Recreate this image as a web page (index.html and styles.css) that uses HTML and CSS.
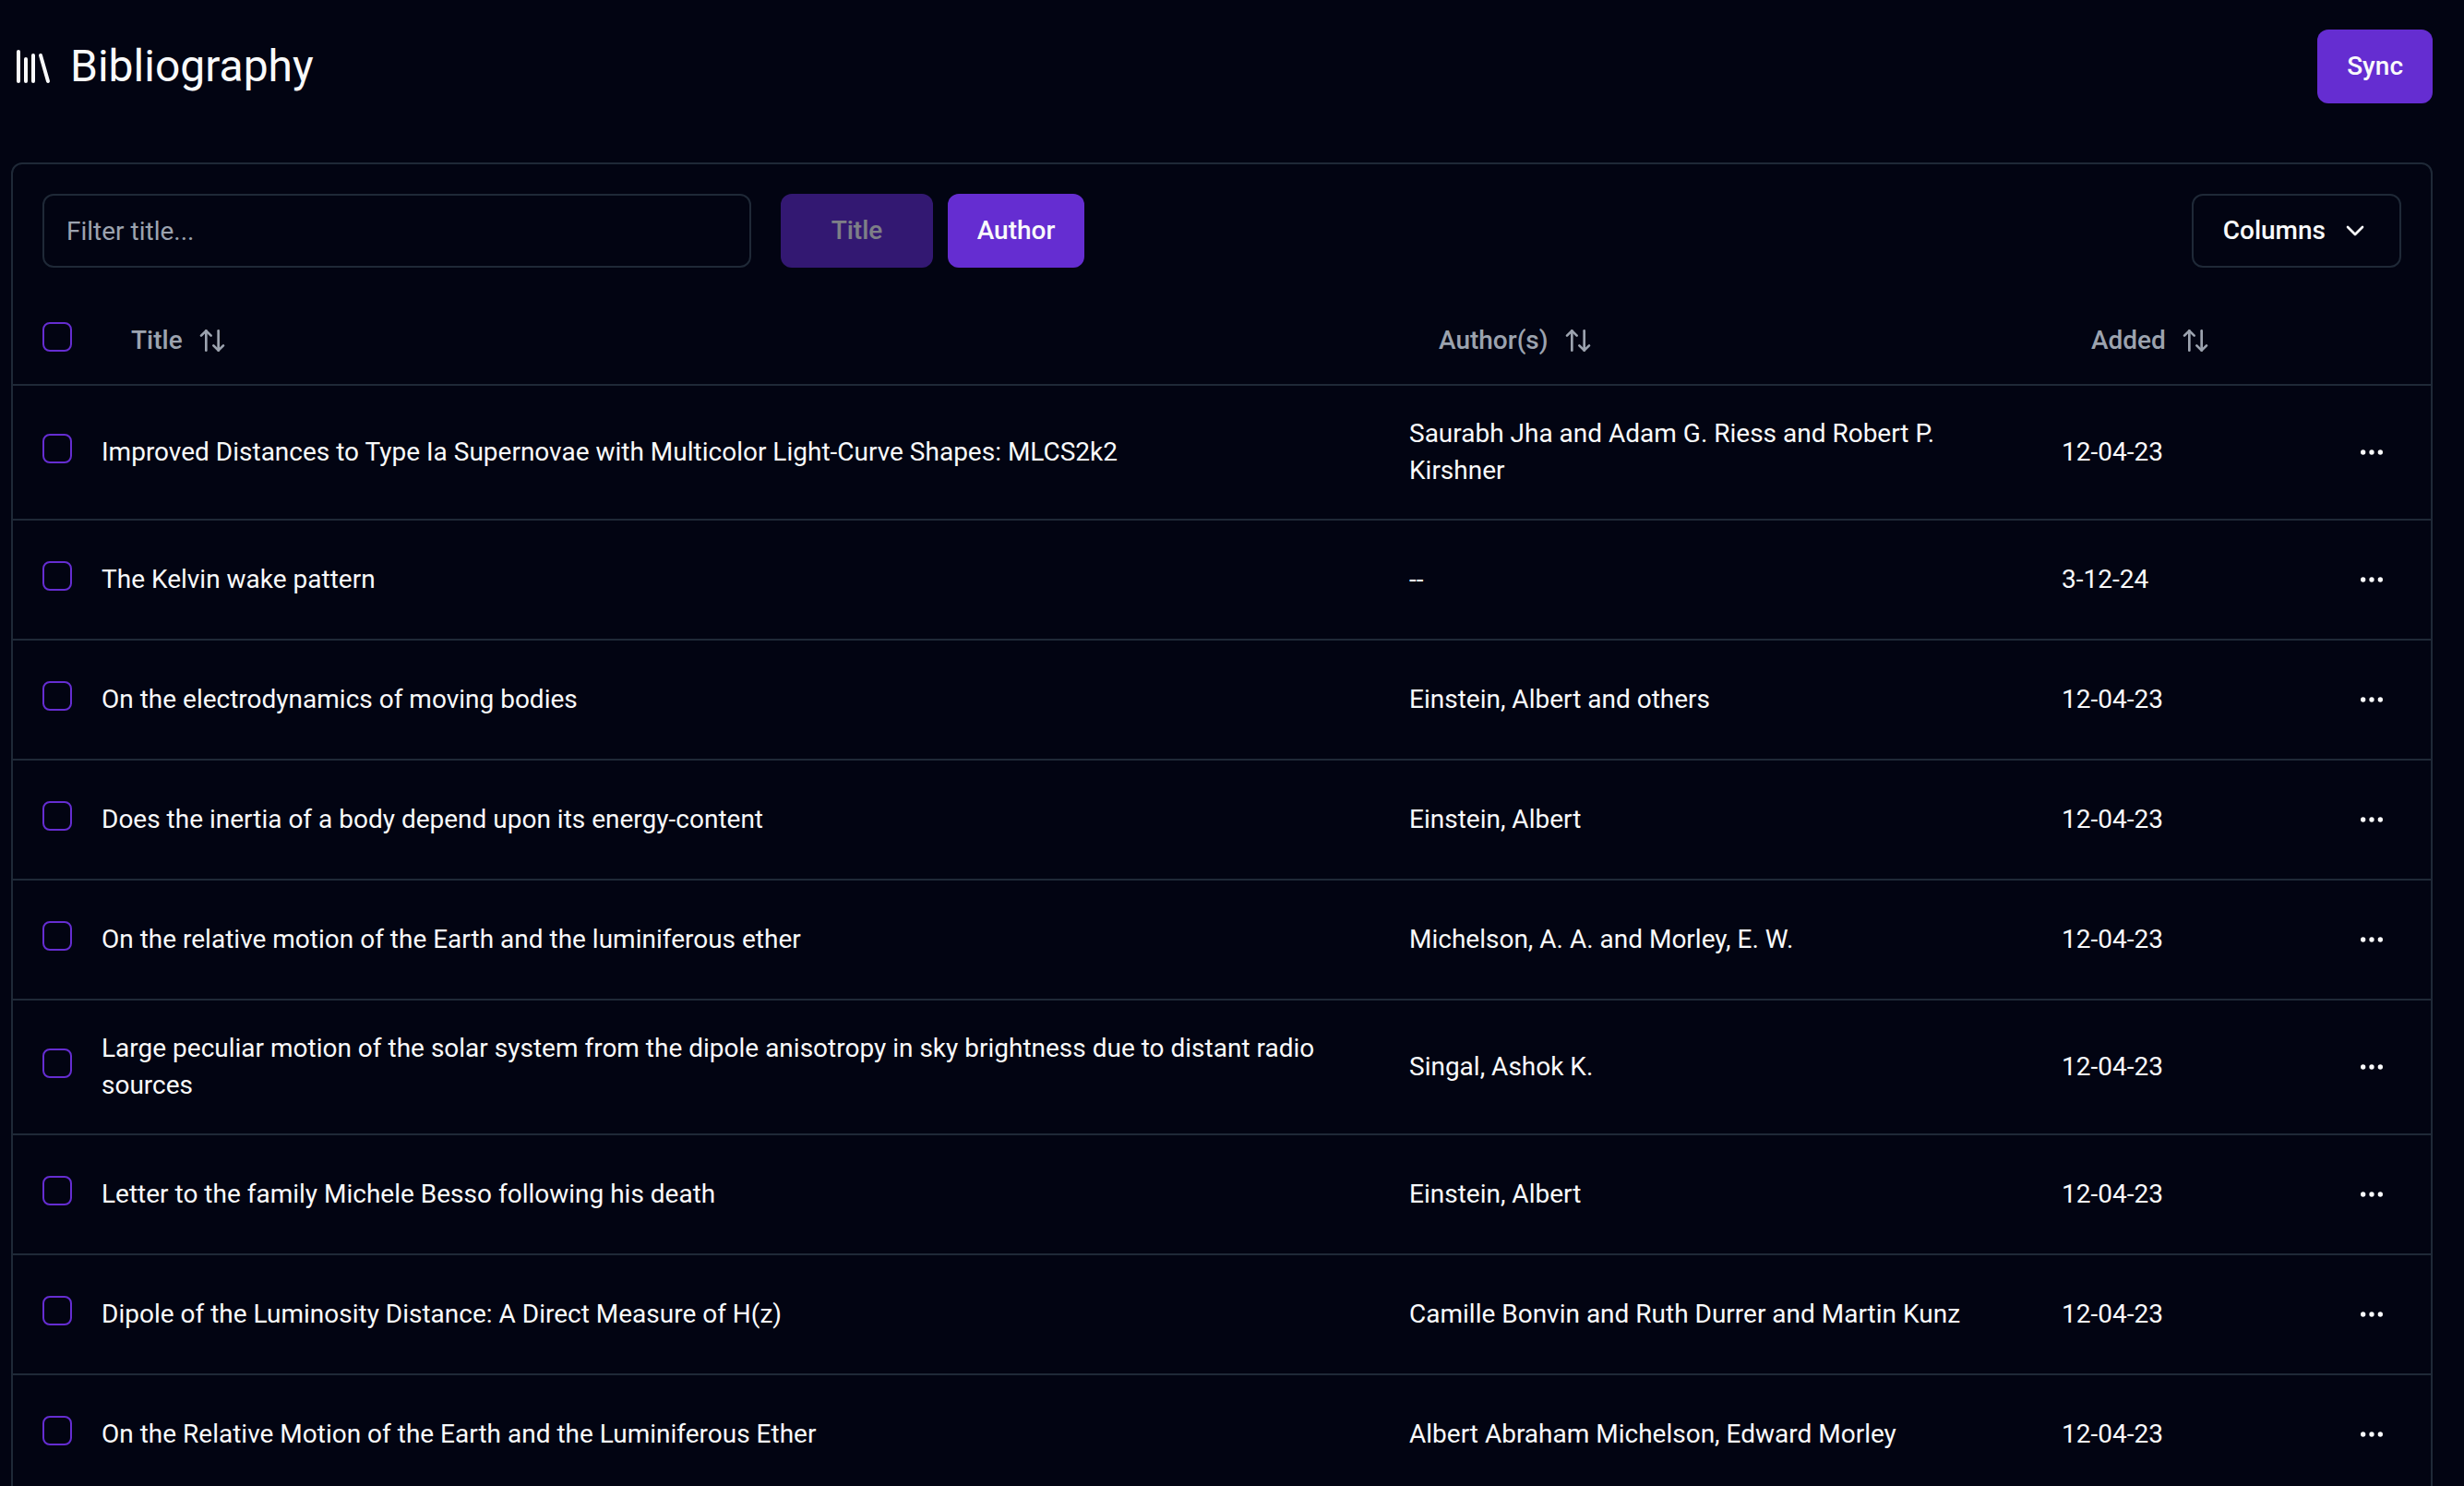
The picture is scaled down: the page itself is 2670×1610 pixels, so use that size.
FILE: index.html
```html
<!doctype html>
<html>

<head>
    <meta charset="utf-8">
    <title>Bibliography</title>
    <link rel="stylesheet" href="styles.css">
</head>

<body>
    <header class="page-header">
        <h1 class="page-title">
            <svg class="icon-title" viewBox="0 0 24 24" fill="none" stroke="currentColor" stroke-width="2" stroke-linecap="round" stroke-linejoin="round">
                <path d="m16 6 4 14" />
                <path d="M12 6v14" />
                <path d="M8 8v12" />
                <path d="M4 4v16" />
            </svg>
            Bibliography
        </h1>
        <button class="btn btn-primary" type="button">Sync</button>
    </header>

    <section class="card">
        <div class="toolbar">
            <input class="filter" type="text" placeholder="Filter title...">
            <button class="btn btn-primary btn-disabled" type="button">Title</button>
            <button class="btn btn-primary btn-author" type="button">Author</button>
            <button class="btn btn-outline" type="button">
                Columns
                <svg class="icon" viewBox="0 0 24 24" fill="none" stroke="currentColor" stroke-width="2" stroke-linecap="round" stroke-linejoin="round">
                    <path d="m6 9 6 6 6-6" />
                </svg>
            </button>
        </div>

        <table class="table">
            <colgroup>
                <col class="col-check">
                <col class="col-title">
                <col class="col-author">
                <col class="col-added">
                <col class="col-actions">
            </colgroup>
            <thead>
                <tr>
                    <th class="cell-check"><span class="checkbox"></span></th>
                    <th>
                        <span class="sort">Title
                            <svg class="icon" viewBox="0 0 24 24" fill="none" stroke="currentColor" stroke-width="2" stroke-linecap="round" stroke-linejoin="round"><path d="m21 16-4 4-4-4" /><path d="M17 20V4" /><path d="m3 8 4-4 4 4" /><path d="M7 4v16" /></svg>
                        </span>
                    </th>
                    <th>
                        <span class="sort">Author(s)
                            <svg class="icon" viewBox="0 0 24 24" fill="none" stroke="currentColor" stroke-width="2" stroke-linecap="round" stroke-linejoin="round"><path d="m21 16-4 4-4-4" /><path d="M17 20V4" /><path d="m3 8 4-4 4 4" /><path d="M7 4v16" /></svg>
                        </span>
                    </th>
                    <th>
                        <span class="sort">Added
                            <svg class="icon" viewBox="0 0 24 24" fill="none" stroke="currentColor" stroke-width="2" stroke-linecap="round" stroke-linejoin="round"><path d="m21 16-4 4-4-4" /><path d="M17 20V4" /><path d="m3 8 4-4 4 4" /><path d="M7 4v16" /></svg>
                        </span>
                    </th>
                    <th></th>
                </tr>
            </thead>
            <tbody id="rows"></tbody>
        </table>
    </section>

    <script>
        var papers = [
            ['Improved Distances to Type Ia Supernovae with Multicolor Light-Curve Shapes: MLCS2k2', 'Saurabh Jha and Adam G. Riess and Robert P. Kirshner', '12-04-23'],
            ['The Kelvin wake pattern', '--', '3-12-24'],
            ['On the electrodynamics of moving bodies', 'Einstein, Albert and others', '12-04-23'],
            ['Does the inertia of a body depend upon its energy-content', 'Einstein, Albert', '12-04-23'],
            ['On the relative motion of the Earth and the luminiferous ether', 'Michelson, A. A. and Morley, E. W.', '12-04-23'],
            ['Large peculiar motion of the solar system from the dipole anisotropy in sky brightness due to distant radio sources', 'Singal, Ashok K.', '12-04-23'],
            ['Letter to the family Michele Besso following his death', 'Einstein, Albert', '12-04-23'],
            ['Dipole of the Luminosity Distance: A Direct Measure of H(z)', 'Camille Bonvin and Ruth Durrer and Martin Kunz', '12-04-23'],
            ['On the Relative Motion of the Earth and the Luminiferous Ether', 'Albert Abraham Michelson, Edward Morley', '12-04-23']
        ];

        var dots = '<svg class="icon" viewBox="0 0 24 24" fill="none" stroke="currentColor" stroke-width="2" stroke-linecap="round" stroke-linejoin="round"><circle cx="12" cy="12" r="1" /><circle cx="19" cy="12" r="1" /><circle cx="5" cy="12" r="1" /></svg>';

        var html = '';
        for (var i = 0; i < papers.length; i++) {
            html += '<tr>';
            html += '<td class="cell-check"><span class="checkbox"></span></td>';
            html += '<td>' + papers[i][0] + '</td>';
            html += '<td>' + papers[i][1] + '</td>';
            html += '<td>' + papers[i][2] + '</td>';
            html += '<td><span class="row-menu">' + dots + '</span></td>';
            html += '</tr>';
        }
        document.getElementById('rows').innerHTML = html;
    </script>
</body>

</html>
```

FILE: styles.css
```css
* {
    box-sizing: border-box;
}

html,
body {
    height: 100%;
    overflow: hidden;
}

body {
    margin: 0;
    padding: 32px 34px 0 12px;
    background: #020412;
    color: #f9fafb;
    font-family: Roboto, sans-serif;
    font-size: 28px;
    line-height: 40px;
}

.page-header {
    display: flex;
    justify-content: space-between;
    align-items: center;
    height: 80px;
    margin-bottom: 64px;
}

.page-title {
    display: flex;
    align-items: center;
    gap: 16px;
    margin: 0;
    font-size: 48px;
    font-weight: 400;
    line-height: 56px;
}

.icon-title {
    width: 48px;
    height: 48px;
}

.icon {
    flex: none;
    width: 32px;
    height: 32px;
}

.btn {
    display: inline-flex;
    align-items: center;
    justify-content: center;
    height: 80px;
    padding: 0 32px;
    border: none;
    border-radius: 12px;
    font: inherit;
    font-weight: 500;
    color: #f9fafb;
}

.btn-primary {
    background: #652dd1;
}

.btn-disabled {
    width: 165px;
    opacity: 0.5;
}

.btn-author {
    width: 148px;
    padding: 0;
}

.btn-outline {
    gap: 16px;
    margin-left: auto;
    background: transparent;
    border: 2px solid #1f2937;
}

.card {
    border: 2px solid #1f2937;
    border-radius: 12px;
}

.toolbar {
    display: flex;
    align-items: center;
    gap: 16px;
    padding: 32px;
}

.filter {
    width: 768px;
    height: 80px;
    margin-right: 16px;
    padding: 0 24px;
    background: transparent;
    border: 2px solid #1f2937;
    border-radius: 12px;
    font: inherit;
    color: #f9fafb;
}

.filter::placeholder {
    color: #9ca3af;
    opacity: 1;
}

.table {
    width: 100%;
    table-layout: fixed;
    border-collapse: collapse;
}

.col-check {
    width: 64px;
}

.col-author {
    width: 707px;
}

.col-added {
    width: 304px;
}

.col-actions {
    width: 128px;
}

th {
    height: 95px;
    padding: 0 32px;
    text-align: left;
    font-weight: 500;
    color: #9ca3af;
    border-bottom: 2px solid #1f2937;
}

td {
    padding: 32px;
    border-bottom: 2px solid #1f2937;
}

.cell-check {
    padding: 0 0 8px 32px;
}

.checkbox {
    display: block;
    width: 32px;
    height: 32px;
    border: 2px solid #652dd1;
    border-radius: 8px;
}

.sort {
    display: flex;
    align-items: center;
    gap: 16px;
    padding: 0 32px;
}

.row-menu {
    display: flex;
    justify-content: center;
    align-items: center;
    width: 64px;
    height: 64px;
}
```
